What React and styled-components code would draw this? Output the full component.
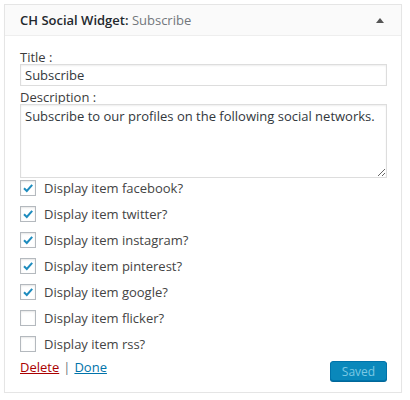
import React from 'react';
import styled, { createGlobalStyle } from 'styled-components';

const Global = createGlobalStyle`
  body {
    margin: 0;
    background: #fff;
    font-family: "Open Sans", "Noto Sans", sans-serif;
    font-size: 13px;
    color: #444;
  }
`;

const Widget = styled.div`
  margin: 4px 0 0 4px;
  width: 398px;
  box-sizing: border-box;
  border: 1px solid #e5e5e5;
  box-shadow: 0 1px 1px rgba(0, 0, 0, 0.04);
  display: flex;
  flex-direction: column;
`;

const Header = styled.div`
  height: 31px;
  box-sizing: border-box;
  flex: none;
  background: #fafafa;
  border-bottom: 1px solid #eee;
  display: flex;
  align-items: center;
  justify-content: space-between;
  padding: 0 17px 0 15px;
  font-size: 13px;
  color: #23282d;
`;

const Name = styled.span`
  font-weight: 600;
`;

const Instance = styled.span`
  color: #72777c;
  font-weight: 400;
`;

const Arrow = styled.span`
  width: 0;
  height: 0;
  border-left: 4px solid transparent;
  border-right: 4px solid transparent;
  border-bottom: 5px solid #555;
`;

const Body = styled.div`
  padding: 13px 14px 11px 15px;
  display: flex;
  flex-direction: column;
`;

const Label = styled.label`
  display: block;
  color: #3c3c3c;
  line-height: 16px;
`;

const Input = styled.input`
  display: block;
  box-sizing: border-box;
  width: 100%;
  height: 22px;
  margin: -1px 0 3px;
  padding: 0 4px;
  border: 1px solid #ddd;
  box-shadow: inset 0 1px 2px rgba(0, 0, 0, 0.07);
  font: inherit;
  color: #32373c;
  outline: none;
`;

const Area = styled.textarea`
  display: block;
  box-sizing: border-box;
  width: 100%;
  height: 74px;
  margin: -1px 0 2px;
  padding: 2px 4px;
  border: 1px solid #ddd;
  box-shadow: inset 0 1px 2px rgba(0, 0, 0, 0.07);
  font: inherit;
  line-height: 18px;
  color: #32373c;
  outline: none;
`;

const Checks = styled.div`
  display: flex;
  flex-direction: column;
  gap: 10px;
`;

const CheckRow = styled.div`
  display: flex;
  align-items: center;
  gap: 8px;
  height: 16px;
  color: #444;
`;

const Box = styled.span`
  width: 16px;
  height: 16px;
  box-sizing: border-box;
  border: 1px solid #b4b9be;
  box-shadow: inset 0 1px 2px rgba(0, 0, 0, 0.1);
  background: #fff;
  display: flex;
  align-items: center;
  justify-content: center;
`;

const Footer = styled.div`
  display: flex;
  justify-content: space-between;
  align-items: center;
  margin-top: 9px;
`;

const Links = styled.div`
  color: #72777c;
  display: flex;
  gap: 4px;
  margin-top: -8px;
`;

const Link = styled.a`
  color: ${(p) => (p.$danger ? '#a00' : '#0073aa')};
  text-decoration: underline;
`;

const SaveButton = styled.button`
  width: 57px;
  height: 20px;
  background: #0a88bb;
  border: 1px solid #0073aa;
  border-radius: 3px;
  box-shadow: 0 1px 0 #006799;
  color: #7cc8e4;
  font: inherit;
  font-size: 12px;
  padding: 0;
`;

const Check = ({ on }) => (
  <Box>
    {on && (
      <svg width="12" height="12" viewBox="0 0 12 12">
        <path d="M2 6.2 L4.8 9 L10.2 2.8" fill="none" stroke="#1e8cbe" strokeWidth="2" />
      </svg>
    )}
  </Box>
);

const items = [
  ['facebook', true],
  ['twitter', true],
  ['instagram', true],
  ['pinterest', true],
  ['google', true],
  ['flicker', false],
  ['rss', false],
];

const App = () => (
  <>
    <Global />
    <Widget>
      <Header>
        <div>
          <Name>CH Social Widget:</Name> <Instance>Subscribe</Instance>
        </div>
        <Arrow />
      </Header>
      <Body>
        <Label>Title :</Label>
        <Input defaultValue="Subscribe" />
        <Label>Description :</Label>
        <Area defaultValue="Subscribe to our profiles on the following social networks." />
        <Checks>
          {items.map(([name, on]) => (
            <CheckRow key={name}>
              <Check on={on} />
              Display item {name}?
            </CheckRow>
          ))}
        </Checks>
        <Footer>
          <Links>
            <Link $danger>Delete</Link>|<Link>Done</Link>
          </Links>
          <SaveButton>Saved</SaveButton>
        </Footer>
      </Body>
    </Widget>
  </>
);

export default App;
